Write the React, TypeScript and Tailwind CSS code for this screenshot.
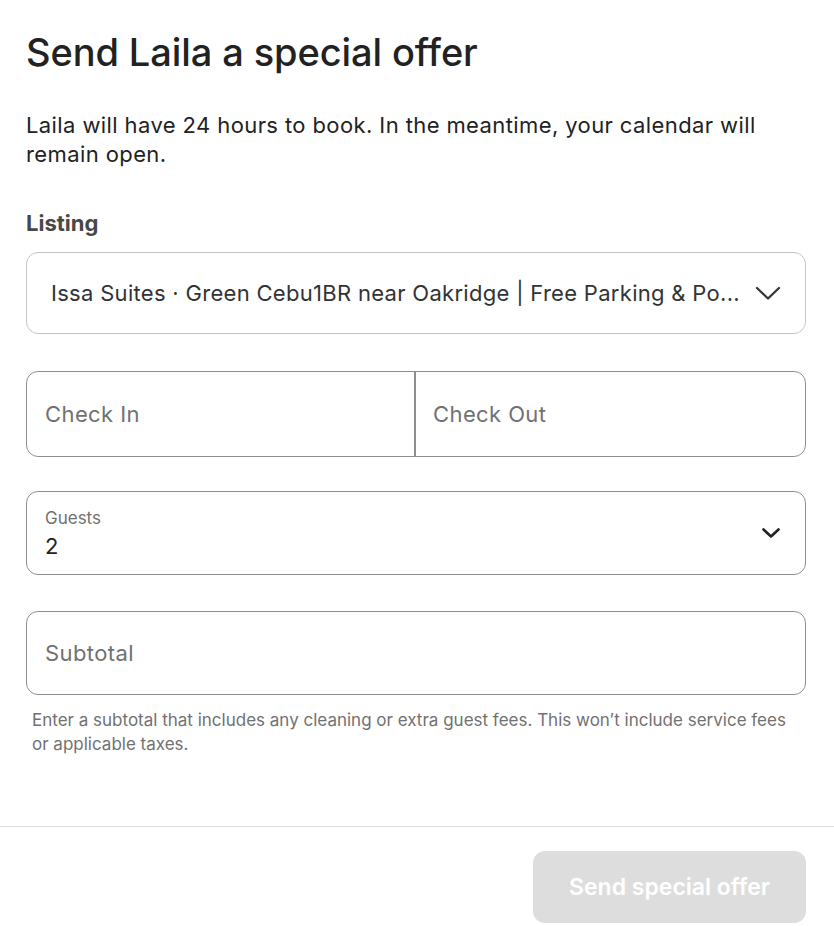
const FONT = { fontFamily: 'Inter, "Noto Sans", sans-serif' }

function Chevron({ className }: { className?: string }) {
  return (
    <svg width="26" height="14" viewBox="0 0 26 14" className={className} fill="none" stroke="#333333" strokeWidth="2.2" strokeLinecap="round" strokeLinejoin="round">
      <path d="M2 2 L13 12.5 L24 2" />
    </svg>
  )
}

export default function App() {
  return (
    <div className="w-[834px] h-[926px] bg-white text-[#222222] flex flex-col" style={FONT}>
      <div className="pl-[26px] pr-[28px] flex-1">
        <h1 className="pt-[27px] text-[38px] leading-[50px] font-medium tracking-[-0.1px]">Send Laila a special offer</h1>

        <p className="mt-[34px] text-[22px] leading-[29px] tracking-[0.4px] text-[#222222]">
          Laila will have 24 hours to book. In the meantime, your calendar will remain open.
        </p>

        <div className="mt-[41px] text-[22px] leading-[26px] font-bold text-[#484848]">Listing</div>

        <button className="mt-[16px] w-full h-[82px] rounded-[12px] border border-[#c4c4c4] flex items-center justify-between pl-[24px] pr-[24px] text-left">
          <span className="text-[22px] tracking-[0.3px] text-[#333333] truncate">
            Issa Suites · Green Cebu1BR near Oakridge | Free Parking &amp; Po...
          </span>
          <Chevron className="shrink-0 ml-3" />
        </button>

        <div className="mt-[37px] h-[86px] rounded-[12px] border border-[#8e8e8e] grid grid-cols-2 overflow-hidden">
          <div className="flex items-center pl-[18px] text-[22px] tracking-[0.4px] text-[#717171] border-r-[2px] border-[#8e8e8e]">Check In</div>
          <div className="flex items-center pl-[17px] text-[22px] tracking-[0.4px] text-[#717171]">Check Out</div>
        </div>

        <div className="mt-[34px] h-[84px] rounded-[12px] border border-[#8e8e8e] flex items-center justify-between pl-[18px] pr-[24px]">
          <div className="flex flex-col">
            <span className="text-[17px] leading-[20px] text-[#717171]">Guests</span>
            <span className="mt-[5px] text-[22px] leading-[26px] text-[#222222]">2</span>
          </div>
          <svg width="20" height="12" viewBox="0 0 20 12" fill="none" stroke="#222222" strokeWidth="2.6" strokeLinecap="round" strokeLinejoin="round">
            <path d="M2.5 2.5 L10 9.5 L17.5 2.5" />
          </svg>
        </div>

        <div className="mt-[36px] h-[84px] rounded-[12px] border border-[#8e8e8e] flex items-center pl-[18px] text-[22px] tracking-[0.4px] text-[#717171]">
          Subtotal
        </div>

        <p className="mt-[13px] pl-[6px] pr-[8px] text-[17px] leading-[24px] text-[#717171]">
          Enter a subtotal that includes any cleaning or extra guest fees. This won’t include service fees or applicable taxes.
        </p>
      </div>

      <div className="border-t border-[#dddddd] flex justify-end px-[28px] pt-[24px] pb-[3px]">
        <button className="w-[273px] h-[72px] rounded-[12px] bg-[#dddddd] text-white text-[23px] font-semibold">
          Send special offer
        </button>
      </div>
    </div>
  )
}
